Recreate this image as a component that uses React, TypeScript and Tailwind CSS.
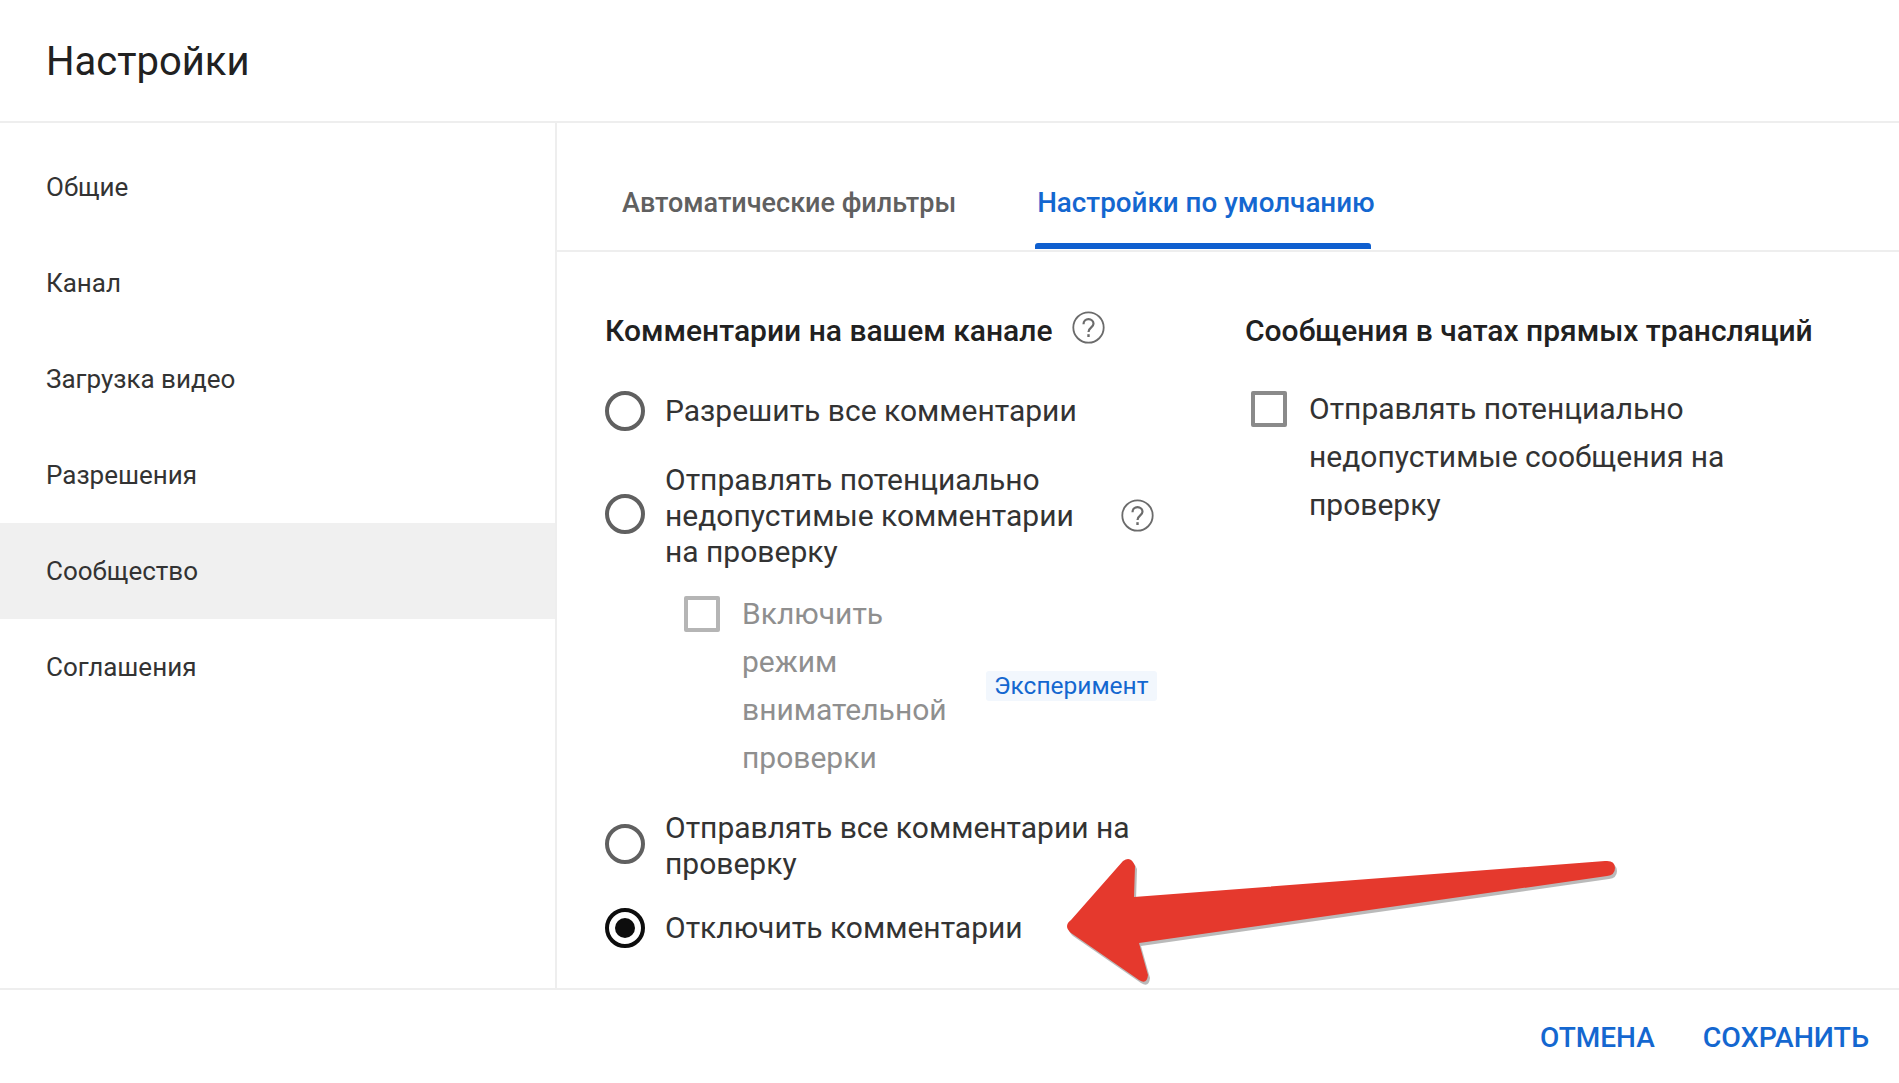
import type { ReactNode } from "react";

const NAV = ["Общие", "Канал", "Загрузка видео", "Разрешения", "Сообщество", "Соглашения"];

function Radio({ checked }: { checked?: boolean }) {
  return (
    <span
      className={`flex h-[40px] w-[40px] shrink-0 items-center justify-center rounded-full border-[4px] ${
        checked ? "border-[#0d0d0d]" : "border-[#606060]"
      }`}
    >
      {checked && <span className="h-[20px] w-[20px] rounded-full bg-[#0d0d0d]" />}
    </span>
  );
}

function Checkbox({ muted }: { muted?: boolean }) {
  return (
    <span
      className={`block h-[36px] w-[36px] shrink-0 rounded-[2px] border-[4px] ${
        muted ? "border-[#b5b5b5]" : "border-[#8a8a8a]"
      }`}
    />
  );
}

function HelpIcon() {
  return (
    <svg viewBox="0 0 33 33" className="h-[33px] w-[33px] shrink-0" fill="none" stroke="#6b6b6b">
      <circle cx="16.5" cy="16.5" r="15.2" strokeWidth="1.8" />
      <path d="M11.5 13.2c0-3 2.2-5 5-5s5 2 5 4.6c0 3.6-5 3.6-5 8.2" strokeWidth="2.2" />
      <path d="M16.5 23.2v2.8" strokeWidth="2.4" />
    </svg>
  );
}

function RadioRow({ checked, raised, children }: { checked?: boolean; raised?: boolean; children: ReactNode }) {
  return (
    <div className="flex items-center gap-[20px]">
      <span className={raised ? "-mt-[5px]" : ""}>
        <Radio checked={checked} />
      </span>
      {children}
    </div>
  );
}

function Arrow() {
  return (
    <svg
      viewBox="0 0 1899 1083"
      className="pointer-events-none absolute inset-0 h-full w-full"
    >
      <path
        d="M1071 920 L1123 861 Q1131 855 1135 866 L1134 897 L1605 861 Q1615 860 1615 868 Q1615 875 1607 876 L1139 943 L1148 975 Q1147 985 1139 980 L1071 933 Q1063 926 1071 920 Z"
        fill="#a9a9a9"
        opacity="0.8"
        transform="translate(2 3)"
      />
      <path
        d="M1071 920 L1123 861 Q1131 855 1135 866 L1134 897 L1605 861 Q1615 860 1615 868 Q1615 875 1607 876 L1139 943 L1148 975 Q1147 985 1139 980 L1071 933 Q1063 926 1071 920 Z"
        fill="#e5392d"
      />
    </svg>
  );
}

export default function App() {
  return (
    <div className="relative flex h-[1083px] w-[1899px] flex-col overflow-hidden bg-white font-['Roboto',sans-serif] text-[30px] leading-[36px] text-[#333333]">
      <header className="flex h-[123px] shrink-0 items-center border-b-2 border-[#eeeeee] pt-[2px] pl-[46px]">
        <h1 className="text-[40px] font-normal text-[#212121]">Настройки</h1>
      </header>

      <div className="flex min-h-0 flex-1">
        <nav className="w-[557px] shrink-0 border-r-2 border-[#eeeeee] pt-[16px] text-[26px]">
          {NAV.map((item) => (
            <div
              key={item}
              className={`flex h-[96px] items-center pl-[46px] ${item === "Сообщество" ? "bg-[#f0f0f0]" : ""}`}
            >
              {item}
            </div>
          ))}
        </nav>

        <main className="min-w-0 flex-1">
          <div className="flex h-[129px] items-end gap-[81px] border-b-2 border-[#eeeeee] pl-[65px]">
            <div className="flex h-[88px] items-center pb-[7px] text-[27px] font-medium text-[#606060]">
              Автоматические фильтры
            </div>
            <div className="relative flex h-[88px] items-center pb-[7px] text-[27.8px] font-medium text-[#1467d0]">
              Настройки по умолчанию
              <span className="absolute bottom-[1px] left-[-2px] right-[4px] h-[6px] rounded-t-[3px] bg-[#0f5fcf]" />
            </div>
          </div>

          <div className="flex pl-[48px] pt-[59px]">
            <section className="w-[640px] shrink-0">
              <div className="flex h-[40px] items-center gap-[19px]">
                <h2 className="font-medium text-[#212121]">Комментарии на вашем канале</h2>
                <span className="-mt-[8px]">
                  <HelpIcon />
                </span>
              </div>

              <div className="mt-[40px]">
                <RadioRow>
                  <span>Разрешить все комментарии</span>
                </RadioRow>
              </div>

              <div className="mt-[31px]">
                <RadioRow raised>
                  <span className="w-[436px]">Отправлять потенциально недопустимые комментарии на проверку</span>
                  <span className="-mt-[2px]">
                    <HelpIcon />
                  </span>
                </RadioRow>
              </div>

              <div className="mt-[20px] flex items-center pl-[79px] leading-[48px] text-[#8f8f8f]">
                <span className="flex h-[192px] shrink-0 items-start pt-[6px]">
                  <Checkbox muted />
                </span>
                <span className="ml-[22px] w-[215px] shrink-0">Включить режим внимательной проверки</span>
                <span className="ml-[29px] rounded-[3px] bg-[#f2f7fd] px-[8px] text-[24.5px] leading-[30px] text-[#1467d0]">
                  Эксперимент
                </span>
              </div>

              <div className="mt-[28px]">
                <RadioRow raised>
                  <span className="w-[480px]">Отправлять все комментарии на проверку</span>
                </RadioRow>
              </div>

              <div className="mt-[26px]">
                <RadioRow checked>
                  <span>Отключить комментарии</span>
                </RadioRow>
              </div>
            </section>

            <section className="min-w-0 flex-1">
              <h2 className="flex h-[40px] items-center font-medium text-[#212121]">
                Сообщения в чатах прямых трансляций
              </h2>
              <div className="mt-[34px] flex pl-[6px]">
                <span className="mt-[6px]">
                  <Checkbox />
                </span>
                <span className="ml-[22px] w-[440px] leading-[48px]">
                  Отправлять потенциально недопустимые сообщения на проверку
                </span>
              </div>
            </section>
          </div>
        </main>
      </div>

      <footer className="flex h-[95px] shrink-0 items-center justify-end gap-[48px] border-t-2 border-[#eeeeee] pt-[2px] pr-[30px] text-[28px] font-medium text-[#1467d0]">
        <button>ОТМЕНА</button>
        <button className="text-[28.5px]">СОХРАНИТЬ</button>
      </footer>

      <Arrow />
    </div>
  );
}
